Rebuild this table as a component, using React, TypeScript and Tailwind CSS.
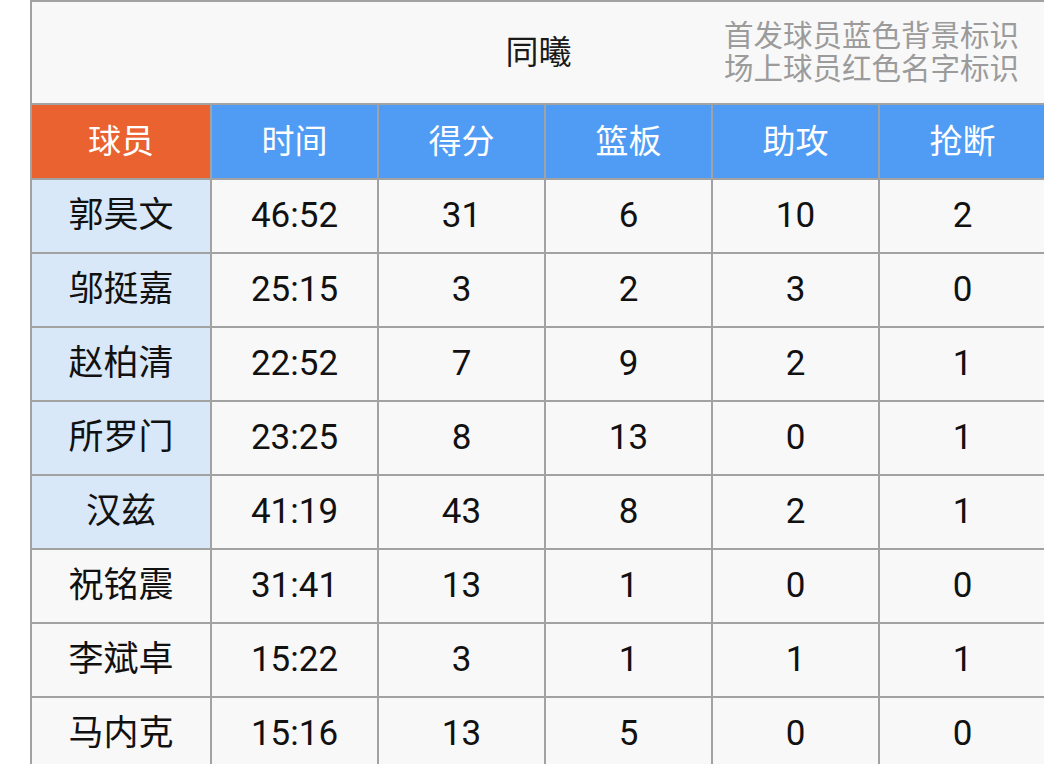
const HEADERS = ['球员', '时间', '得分', '篮板', '助攻', '抢断'];

const PLAYERS = [
  { name: '郭昊文', time: '46:52', pts: 31, reb: 6, ast: 10, stl: 2, starter: true },
  { name: '邬挺嘉', time: '25:15', pts: 3, reb: 2, ast: 3, stl: 0, starter: true },
  { name: '赵柏清', time: '22:52', pts: 7, reb: 9, ast: 2, stl: 1, starter: true },
  { name: '所罗门', time: '23:25', pts: 8, reb: 13, ast: 0, stl: 1, starter: true },
  { name: '汉兹', time: '41:19', pts: 43, reb: 8, ast: 2, stl: 1, starter: true },
  { name: '祝铭震', time: '31:41', pts: 13, reb: 1, ast: 0, stl: 0, starter: false },
  { name: '李斌卓', time: '15:22', pts: 3, reb: 1, ast: 1, stl: 1, starter: false },
  { name: '马内克', time: '15:16', pts: 13, reb: 5, ast: 0, stl: 0, starter: false },
];

export default function App() {
  return (
    <main
      className="min-h-screen bg-white overflow-hidden"
      style={{ fontFamily: 'Roboto, "Noto Sans CJK SC", sans-serif' }}
    >
      <div className="ml-[30px] w-[1018px] border-2 border-[#a2a2a2] bg-[#a2a2a2] grid grid-cols-[178px_repeat(5,165px)] gap-[2px]">
        <div className="col-span-6 h-[101px] bg-[#f8f8f8] grid grid-cols-[1fr_auto_1fr] items-center">
          <div />
          <div className="text-[33px] text-[#1a1a1a]">同曦</div>
          <div className="justify-self-end pr-[26px] text-[29.5px] leading-[33px] text-[#9b9b9b] text-right">
            <div>首发球员蓝色背景标识</div>
            <div>场上球员红色名字标识</div>
          </div>
        </div>
        {HEADERS.map((h, i) => (
          <div
            key={h}
            className={`h-[73px] flex items-center justify-center text-[33px] text-white ${i === 0 ? 'bg-[#e9622f]' : 'bg-[#509cf5]'}`}
          >
            {h}
          </div>
        ))}
        {PLAYERS.map((p) => (
          <div key={p.name} className="contents">
            <div className={`h-[72px] flex items-center justify-center text-[35px] text-[#111] ${p.starter ? 'bg-[#d9e8f9]' : 'bg-[#f8f8f8]'}`}>
              {p.name}
            </div>
            {[p.time, p.pts, p.reb, p.ast, p.stl].map((v, j) => (
              <div key={j} className="h-[72px] flex items-center justify-center bg-[#f8f8f8] text-[35px] text-[#111]">
                {v}
              </div>
            ))}
          </div>
        ))}
      </div>
    </main>
  );
}
